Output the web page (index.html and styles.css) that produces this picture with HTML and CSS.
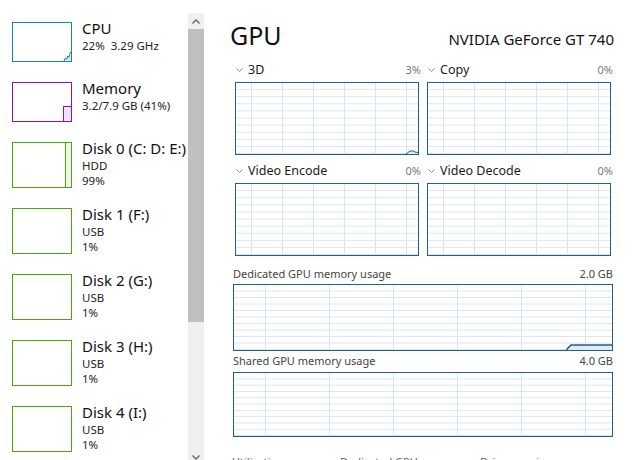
FILE: index.html
```html
<!DOCTYPE html>
<html lang="en">
<head>
<meta charset="utf-8">
<title>Task Manager - GPU</title>
<link rel="stylesheet" href="styles.css">
</head>
<body>
<div class="app">
  <aside class="sidebar">
    <ul class="perf-list">
      <li class="perf-item">
        <div class="thumb thumb-cpu">
          <svg class="thumb-plot cpu-plot" width="10" height="12" viewBox="0 0 10 12"><polygon points="3,12 4,9.3 5.7,10.3 6.7,7 8,8.3 9,4.3 10,2.7 10,12" fill="#dcebf6"/><polyline points="3,12 4,9.3 5.7,10.3 6.7,7 8,8.3 9,4.3 10,2.7" fill="none" stroke="#1c7fc0" stroke-width="1"/></svg>
        </div>
        <div class="perf-text"><div class="perf-title">CPU</div><div class="perf-sub">22%&nbsp; 3.29 GHz</div></div>
      </li>
      <li class="perf-item">
        <div class="thumb thumb-mem"><div class="mem-fill"></div></div>
        <div class="perf-text"><div class="perf-title">Memory</div><div class="perf-sub">3.2/7.9 GB (41%)</div></div>
      </li>
      <li class="perf-item">
        <div class="thumb thumb-disk"><div class="disk-fill"></div></div>
        <div class="perf-text"><div class="perf-title">Disk 0 (C: D: E:)</div><div class="perf-sub">HDD</div><div class="perf-sub">99%</div></div>
      </li>
      <li class="perf-item">
        <div class="thumb thumb-disk"></div>
        <div class="perf-text"><div class="perf-title">Disk 1 (F:)</div><div class="perf-sub">USB</div><div class="perf-sub">1%</div></div>
      </li>
      <li class="perf-item">
        <div class="thumb thumb-disk"></div>
        <div class="perf-text"><div class="perf-title">Disk 2 (G:)</div><div class="perf-sub">USB</div><div class="perf-sub">1%</div></div>
      </li>
      <li class="perf-item">
        <div class="thumb thumb-disk"></div>
        <div class="perf-text"><div class="perf-title">Disk 3 (H:)</div><div class="perf-sub">USB</div><div class="perf-sub">1%</div></div>
      </li>
      <li class="perf-item">
        <div class="thumb thumb-disk"></div>
        <div class="perf-text"><div class="perf-title">Disk 4 (I:)</div><div class="perf-sub">USB</div><div class="perf-sub">1%</div></div>
      </li>
    </ul>
    <div class="scrollbar">
      <div class="sb-btn"><svg width="8" height="5" viewBox="0 0 8 5"><polyline points="0.5,4.5 4,1 7.5,4.5" fill="none" stroke="#606060" stroke-width="1.3"/></svg></div>
      <div class="sb-thumb"></div>
      <div class="sb-track"></div>
      <div class="sb-btn"><svg width="8" height="5" viewBox="0 0 8 5"><polyline points="0.5,0.5 4,4 7.5,0.5" fill="none" stroke="#606060" stroke-width="1.3"/></svg></div>
    </div>
  </aside>

  <main class="main">
    <header class="gpu-header">
      <h1 class="gpu-title">GPU</h1>
      <div class="gpu-name">NVIDIA GeForce GT 740</div>
    </header>

    <div class="engine-grid">
      <section class="engine">
        <div class="engine-label">
          <svg class="chev" width="7" height="4" viewBox="0 0 7 4"><polyline points="0.5,0.5 3.5,3.5 6.5,0.5" fill="none" stroke="#8a8a8a" stroke-width="1"/></svg>
          <span class="engine-name">3D</span><span class="engine-val">3%</span>
        </div>
        <div class="graph graph-small">
          <svg class="plot plot-3d" width="12" height="5" viewBox="0 0 12 5"><polygon points="0,5 2,3.5 4,2 7,2 9,3 12,3.5 12,5" fill="#dcebf6"/><polyline points="0,5 2,3.5 4,2 7,2 9,3 12,3.5" fill="none" stroke="#245d8a" stroke-width="1"/></svg>
        </div>
      </section>
      <section class="engine">
        <div class="engine-label">
          <svg class="chev" width="7" height="4" viewBox="0 0 7 4"><polyline points="0.5,0.5 3.5,3.5 6.5,0.5" fill="none" stroke="#8a8a8a" stroke-width="1"/></svg>
          <span class="engine-name">Copy</span><span class="engine-val">0%</span>
        </div>
        <div class="graph graph-small"></div>
      </section>
      <section class="engine">
        <div class="engine-label">
          <svg class="chev" width="7" height="4" viewBox="0 0 7 4"><polyline points="0.5,0.5 3.5,3.5 6.5,0.5" fill="none" stroke="#8a8a8a" stroke-width="1"/></svg>
          <span class="engine-name">Video Encode</span><span class="engine-val">0%</span>
        </div>
        <div class="graph graph-small"></div>
      </section>
      <section class="engine">
        <div class="engine-label">
          <svg class="chev" width="7" height="4" viewBox="0 0 7 4"><polyline points="0.5,0.5 3.5,3.5 6.5,0.5" fill="none" stroke="#8a8a8a" stroke-width="1"/></svg>
          <span class="engine-name">Video Decode</span><span class="engine-val">0%</span>
        </div>
        <div class="graph graph-small"></div>
      </section>
    </div>

    <section class="mem mem-dedicated">
      <div class="mem-label"><span>Dedicated GPU memory usage</span><span>2.0 GB</span></div>
      <div class="graph graph-wide graph-dedicated">
        <svg class="plot plot-ded" width="46" height="7" viewBox="0 0 46 7"><polygon points="0,7 5,2 46,2 46,7" fill="#dcebf6"/><polyline points="0,7 5,2 46,2" fill="none" stroke="#245d8a" stroke-width="1.5"/></svg>
      </div>
    </section>

    <section class="mem mem-shared">
      <div class="mem-label"><span>Shared GPU memory usage</span><span>4.0 GB</span></div>
      <div class="graph graph-wide graph-shared"></div>
    </section>

    <div class="stats">
      <span class="stat">Utilization</span>
      <span class="stat">Dedicated GPU memory</span>
      <span class="stat">Driver version:</span>
    </div>
  </main>
</div>
</body>
</html>
```

FILE: styles.css
```css
* { box-sizing: border-box; }

html, body {
  margin: 0;
  padding: 0;
  background: #ffffff;
  overflow: hidden;
}

body {
  font-family: "Noto Sans", "Open Sans", sans-serif;
  color: #1a1a1a;
  width: 640px;
  height: 460px;
}

.app {
  display: flex;
  height: 460px;
  overflow: hidden;
}

/* ---------- Sidebar ---------- */
.sidebar {
  display: flex;
  width: 204px;
  flex-shrink: 0;
}

.perf-list {
  list-style: none;
  margin: 0;
  padding: 22px 0 0 12px;
  width: 188px;
}

.perf-item {
  display: flex;
  align-items: flex-start;
  margin-bottom: 20px;
}

.thumb {
  position: relative;
  width: 60px;
  height: 40px;
  border: 1px solid;
  margin-right: 10px;
  flex-shrink: 0;
  background: #fff;
  overflow: hidden;
}

.thumb-cpu { border-color: #1c7fc0; }
.thumb-mem { border-color: #8b12ae; }
.thumb-disk { border-color: #4da60c; height: 46px; }

.thumb-plot {
  position: absolute;
  right: 0;
  bottom: 0;
}

.mem-fill {
  position: absolute;
  right: 0;
  bottom: 0;
  width: 8px;
  height: 15px;
  border: 1px solid #8b12ae;
  border-right: 0;
  border-bottom: 0;
  background: #f3e3f8;
}

.disk-fill {
  position: absolute;
  right: 0;
  top: 0;
  bottom: 0;
  width: 6px;
  border-left: 1px solid #4da60c;
  background: #eef7e7;
}

.perf-text {
  margin-top: -4px;
  white-space: nowrap;
}

.perf-title {
  font-size: 15px;
  line-height: 20px;
  color: #111;
}

.perf-sub {
  font-size: 11.5px;
  line-height: 15px;
  color: #222;
}

.scrollbar {
  display: flex;
  flex-direction: column;
  width: 16px;
  height: 452px;
  margin-top: 13px;
  background: #f0f0f0;
  flex-shrink: 0;
}

.sb-btn {
  height: 16px;
  display: flex;
  align-items: center;
  justify-content: center;
  flex-shrink: 0;
}

.sb-thumb {
  height: 293px;
  background: #c0c0c0;
  flex-shrink: 0;
}

.sb-track { flex: 1; }

/* ---------- Main ---------- */
.main {
  flex: 1;
  padding: 19px 26px 0 26px;
  min-width: 0;
}

.gpu-header {
  display: flex;
  justify-content: space-between;
  align-items: baseline;
}

.gpu-title {
  margin: 0;
  font-size: 25px;
  font-weight: 400;
  line-height: 32px;
  color: #111;
}

.gpu-name {
  font-size: 15px;
  color: #111;
}

.engine-grid {
  display: grid;
  grid-template-columns: 188px 188px;
  column-gap: 4px;
  row-gap: 6px;
  margin: 9px 1px 0 3px;
}

.engine-label {
  display: flex;
  align-items: center;
  height: 18px;
  font-size: 12.5px;
  line-height: 18px;
  margin-bottom: 4px;
  white-space: nowrap;
}

.chev {
  margin: 1px 5px 0 3px;
  flex-shrink: 0;
}

.engine-name { color: #1a1a1a; padding-top: 1px; }

.engine-val {
  margin-left: auto;
  font-size: 11px;
  color: #7a7a7a;
  padding-top: 1px;
}

.graph {
  position: relative;
  border: 1px solid #245d8a;
  background-color: #fff;
  background-repeat: repeat;
}

.graph-small {
  margin: 0 2px;
  height: 73px;
  background-image:
    linear-gradient(to right, #d6e6f0 1px, transparent 1px),
    linear-gradient(to top, #d6e6f0 1px, transparent 1px);
  background-size: 31px 100%, 100% 10%;
  background-position: 15px 0, 0 0;
}

.plot {
  position: absolute;
  right: 0;
  bottom: 0;
}

.mem { margin: 0 1px 0 3px; }
.mem-dedicated { margin-top: 10px; }
.mem-shared { margin-top: 2px; }

.mem-label {
  display: flex;
  justify-content: space-between;
  font-size: 11px;
  line-height: 16px;
  color: #444;
  white-space: nowrap;
}

.graph-wide {
  background-image:
    linear-gradient(to right, #d6e6f0 1px, transparent 1px),
    linear-gradient(to top, #d6e6f0 1px, transparent 1px);
  background-size: 64px 100%, 100% 10%;
  background-position: 31px 0, 0 0;
}

.graph-dedicated { height: 67px; margin-top: 2px; }
.graph-shared { height: 65px; margin-top: 3px; }

.stats {
  display: grid;
  grid-template-columns: 108px 140px 1fr;
  margin-top: 17px;
  padding-left: 2px;
  font-size: 11px;
  line-height: 16px;
  color: #666;
  white-space: nowrap;
}
```
